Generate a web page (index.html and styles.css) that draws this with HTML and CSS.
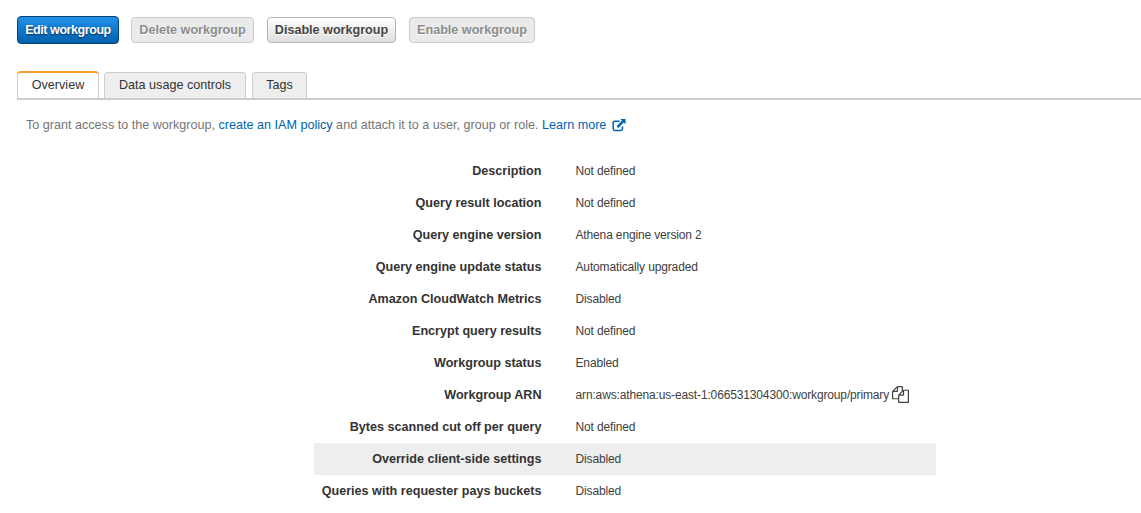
FILE: index.html
```html
<!DOCTYPE html>
<html lang="en">
<head>
<meta charset="utf-8">
<title>Workgroup</title>
<link rel="stylesheet" href="styles.css">
</head>
<body>
<div class="actions">
  <button class="btn primary">Edit workgroup</button>
  <button class="btn delete" disabled>Delete workgroup</button>
  <button class="btn disable">Disable workgroup</button>
  <button class="btn enable" disabled>Enable workgroup</button>
</div>
<nav class="tabs">
  <a class="tab overview active">Overview</a>
  <a class="tab usage">Data usage controls</a>
  <a class="tab tags">Tags</a>
</nav>
<p class="hint">To grant access to the workgroup, <a>create an IAM policy</a> and attach it to a user, group or role. <a>Learn more<svg class="external" viewBox="0 0 14 13"><path d="M7.6 2.2H2.9Q1.2 2.2 1.2 3.9V9.8Q1.2 11.5 2.9 11.5H8.8Q10.5 11.5 10.5 9.8V7.6" fill="none" stroke="currentColor" stroke-width="1.5"/><path d="M8.3 0H13.5V5.2L11.7 3.5L6.2 8.9L4.6 7.3L10 1.8Z" fill="currentColor"/></svg></a></p>
<dl class="details">
  <div class="row"><dt>Description</dt><dd>Not defined</dd></div>
  <div class="row"><dt>Query result location</dt><dd>Not defined</dd></div>
  <div class="row"><dt>Query engine version</dt><dd>Athena engine version 2</dd></div>
  <div class="row"><dt>Query engine update status</dt><dd>Automatically upgraded</dd></div>
  <div class="row"><dt>Amazon CloudWatch Metrics</dt><dd>Disabled</dd></div>
  <div class="row"><dt>Encrypt query results</dt><dd>Not defined</dd></div>
  <div class="row"><dt>Workgroup status</dt><dd>Enabled</dd></div>
  <div class="row"><dt>Workgroup ARN</dt><dd>arn:aws:athena:us-east-1:066531304300:workgroup/primary<svg class="copy" viewBox="0 0 1792 1792"><path fill="currentColor" d="M1696 384q40 0 68 28t28 68v1216q0 40-28 68t-68 28h-960q-40 0-68-28t-28-68v-288h-544q-40 0-68-28t-28-68v-672q0-40 20-88t48-76l408-408q28-28 76-48t88-20h416q40 0 68 28t28 68v328q68-40 128-40h416zm-544 213l-299 299h299v-299zm-640-384l-299 299h299v-299zm196 647l316-316v-416h-384v416q0 40-28 68t-68 28h-416v640h512v-256q0-40 20-88t48-76zm956 804v-1152h-384v416q0 40-28 68t-68 28h-416v640h896z"/></svg></dd></div>
  <div class="row"><dt>Bytes scanned cut off per query</dt><dd>Not defined</dd></div>
  <div class="row highlighted"><dt>Override client-side settings</dt><dd>Disabled</dd></div>
  <div class="row"><dt>Queries with requester pays buckets</dt><dd>Disabled</dd></div>
</dl>
</body>
</html>
```
FILE: styles.css
```css
* { box-sizing: border-box; }
body {
  margin: 0;
  padding: 16px 0 0 17px;
  height: 513px;
  overflow: hidden;
  background: #fff;
  color: #333;
  font-family: "Liberation Sans", Arial, sans-serif;
  font-size: 12.6px;
}
.actions { display: flex; align-items: center; height: 28px; }
.btn {
  height: 26px;
  padding: 0 0 1px;
  border: 1px solid #b3b3b3;
  border-radius: 4px;
  background: linear-gradient(#fff, #dedede);
  color: #444;
  font: bold 12.6px "Liberation Sans", Arial, sans-serif;
  white-space: nowrap;
  text-shadow: 0 1px 0 #fff;
}
.btn:disabled { background: #eaeaea; border-color: #ccc; color: #8c8c8c; }
.btn.primary {
  width: 102px;
  height: 28px;
  padding: 0;
  margin-right: 12px;
  border-color: #004276;
  background: linear-gradient(#2490e8, #0062af);
  color: #fff;
  font-size: 12.5px;
  letter-spacing: -0.43px;
  text-shadow: 0 1px 2px #002b50;
}
.delete { width: 123px; margin-right: 13px; }
.disable { width: 129px; margin-right: 13px; }
.enable { width: 126px; }
.tabs {
  display: flex;
  align-items: flex-end;
  gap: 5px;
  height: 29px;
  margin-top: 27px;
  border-bottom: 2px solid #ccc;
}
.tab {
  height: 26px;
  border: 1px solid #ccc;
  border-bottom: 0;
  border-radius: 4px 4px 0 0;
  background: #eee;
  line-height: 24px;
  text-align: center;
}
.tab.active { height: 27px; border-top: 2px solid #ff9933; background: #fff; }
.overview { width: 82px; }
.usage { width: 142px; }
.tags { width: 55px; margin-left: 1px; }
.hint { margin: 17px 0 0 9px; line-height: 16px; color: #757575; white-space: nowrap; }
.hint a { color: #0063b0; }
.external { width: 14px; height: 13px; margin-left: 6px; vertical-align: -3px; }
.details { width: 622px; margin: 22px 0 0 297px; }
.row { display: flex; height: 32px; line-height: 32px; }
.highlighted { background: #eee; }
dt { width: 227.5px; font-weight: bold; text-align: right; white-space: nowrap; }
dd { display: flex; margin: 0 0 0 34px; align-items: center; font-size: 12px; letter-spacing: -0.145px; color: #404040; white-space: nowrap; }
.copy { width: 17px; height: 17px; margin-left: 3px; margin-top: -1px; }
```
